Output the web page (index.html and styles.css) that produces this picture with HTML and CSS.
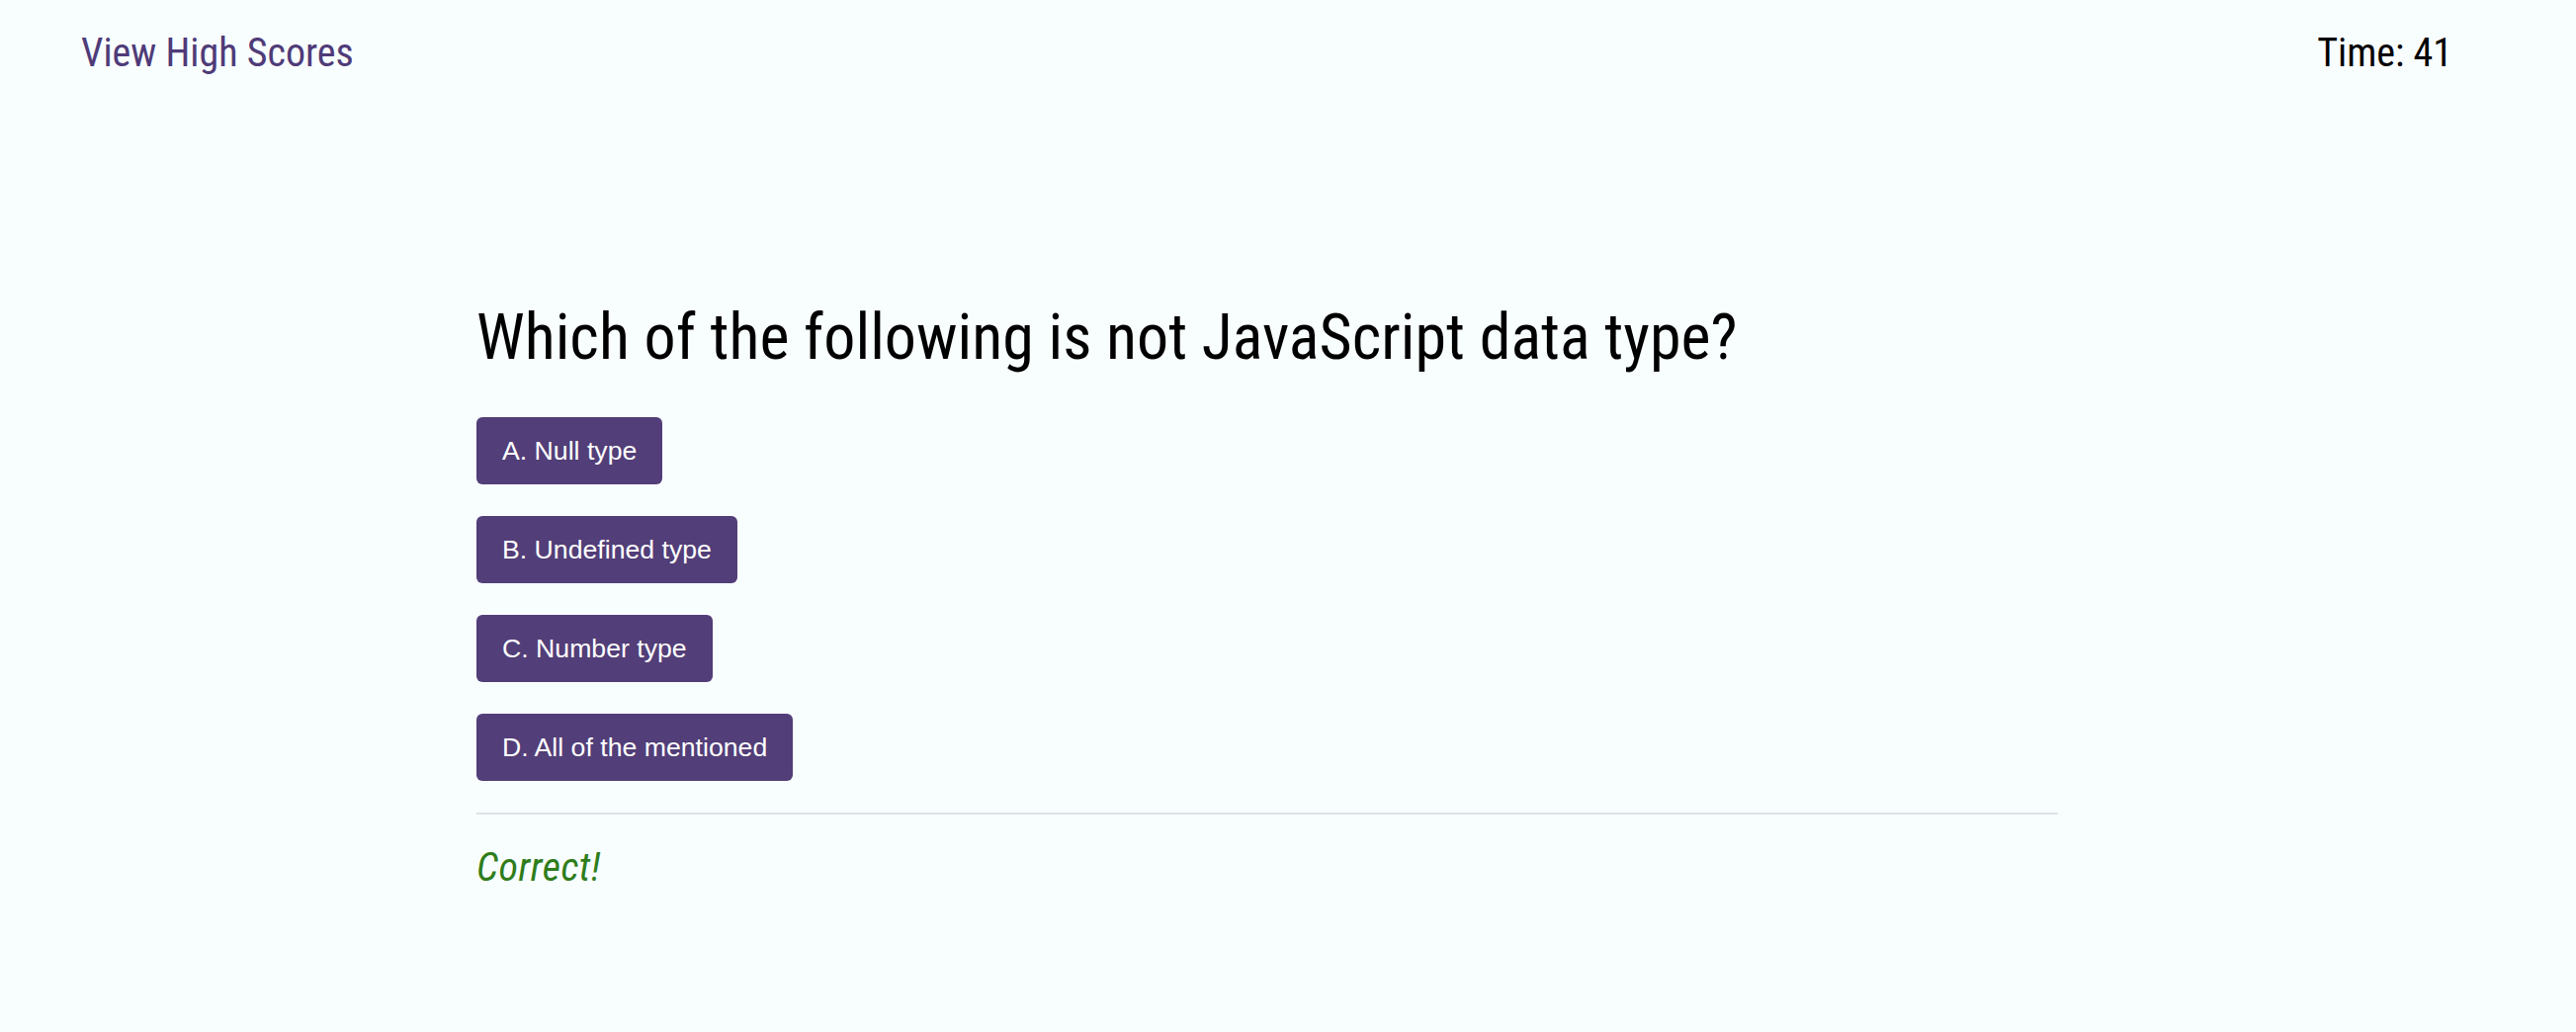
FILE: index.html
```html
<!DOCTYPE html>
<html lang="en">
<head>
<meta charset="utf-8">
<title>Code Quiz</title>
<link rel="stylesheet" href="styles.css">
</head>
<body>
<header class="topbar">
  <a class="scores-link" href="#">View High Scores</a>
  <div class="timer">Time: 41</div>
</header>
<main class="quiz">
  <h1 class="question">Which of the following is not JavaScript data type?</h1>
  <div class="choices">
    <button class="choice">A. Null type</button>
    <button class="choice">B. Undefined type</button>
    <button class="choice">C. Number type</button>
    <button class="choice">D. All of the mentioned</button>
  </div>
  <div class="feedback">Correct!</div>
</main>
</body>
</html>
```

FILE: styles.css
```css
html, body {
  margin: 0;
  padding: 0;
}
body {
  background: #f8fdfe;
  font-family: "Roboto Condensed", Roboto, sans-serif;
  font-stretch: condensed;
  color: #000;
}
.topbar {
  display: flex;
  justify-content: space-between;
  align-items: flex-start;
  padding: 30px 125px 0 82px;
  font-size: 40px;
  line-height: 48px;
}
.scores-link {
  color: #4f3b78;
  text-decoration: none;
}
.timer {
  color: #000;
}
.quiz {
  width: 1600px;
  margin: 224px 0 0 482px;
}
.question {
  margin: 0 0 40px;
  font-size: 64px;
  line-height: 80px;
  font-weight: 400;
}
.choices {
  display: flex;
  flex-direction: column;
  align-items: flex-start;
  gap: 32px;
  padding-bottom: 32px;
  border-bottom: 2px solid #dde2e6;
}
.choice {
  font-family: "Liberation Sans", Arial, sans-serif;
  font-stretch: normal;
  font-size: 26.67px;
  line-height: 30px;
  padding: 19px 26px;
  background: #523e78;
  color: #fff;
  border: 0;
  border-radius: 6px;
}
.feedback {
  margin-top: 30px;
  font-size: 40px;
  line-height: 48px;
  font-style: italic;
  letter-spacing: 0.5px;
  color: #2f7d1b;
}
```
